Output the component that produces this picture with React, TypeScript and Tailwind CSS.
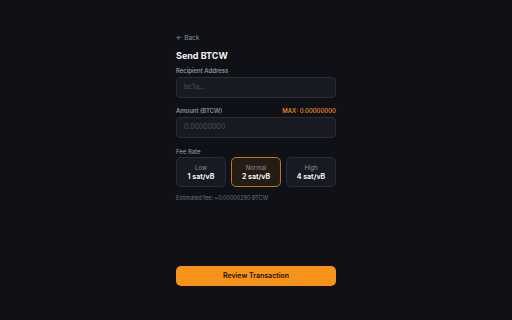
import React from "react";

export default function App() {
  return (
    <div className="w-[512px] h-[320px] bg-[#0f1117] flex justify-center" style={{ fontFamily: "Inter, 'Noto Sans', sans-serif" }}>
      <div className="w-[160px] flex flex-col pt-[34px] pb-[34px]">
        <div className="h-[10px] flex items-center text-[6.5px] text-[#8b8f9a] gap-[2px]">
          <span>←</span><span>Back</span>
        </div>
        <div className="h-[14px] mt-[5px] flex items-center text-[9px] font-bold text-[#f3f4f6]">Send BTCW</div>
        <div className="h-[10px] mt-[2px] flex items-center text-[6px] font-medium text-[#9ca3af]">Recipient Address</div>
        <div className="h-[21px] mt-[2px] rounded-[4px] bg-[#181a22] border border-[#2a2d37] flex items-center px-[7px] text-[7px] text-[#4b5060]">bc1q...</div>
        <div className="h-[10px] mt-[7px] flex items-center justify-between text-[6px] font-medium">
          <span className="text-[#9ca3af]">Amount (BTCW)</span>
          <span className="text-[#f7931a]">MAX: 0.00000000</span>
        </div>
        <div className="h-[21px] mt-[2px] rounded-[4px] bg-[#181a22] border border-[#2a2d37] flex items-center px-[7px] text-[7px] text-[#4b5060]">0.00000000</div>
        <div className="h-[10px] mt-[8px] flex items-center text-[6px] text-[#9ca3af]">Fee Rate</div>
        <div className="mt-[1px] grid grid-cols-3 gap-[5px]">
          {[
            ["Low", "1 sat/vB", false],
            ["Normal", "2 sat/vB", true],
            ["High", "4 sat/vB", false],
          ].map(([a, b, sel]) => (
            <div
              key={a as string}
              className={
                "h-[30px] rounded-[5px] border flex flex-col items-center justify-center " +
                (sel ? "bg-[#231d14] border-[#b8741f]" : "bg-[#181a22] border-[#2a2d37]")
              }
            >
              <span className="text-[6px] leading-[8px] text-[#8b8f9a]">{a}</span>
              <span className="text-[7px] leading-[9px] font-bold text-[#f3f4f6]">{b}</span>
            </div>
          ))}
        </div>
        <div className="h-[10px] mt-[6px] flex items-center text-[5.5px] text-[#6b7080]">Estimated fee: ~0.00000280 BTCW</div>
        <div className="flex-1" />
        <div className="h-[20px] rounded-[5px] bg-[#f7931a] flex items-center justify-center text-[7px] font-semibold text-[#1a1208]">Review Transaction</div>
      </div>
    </div>
  );
}
